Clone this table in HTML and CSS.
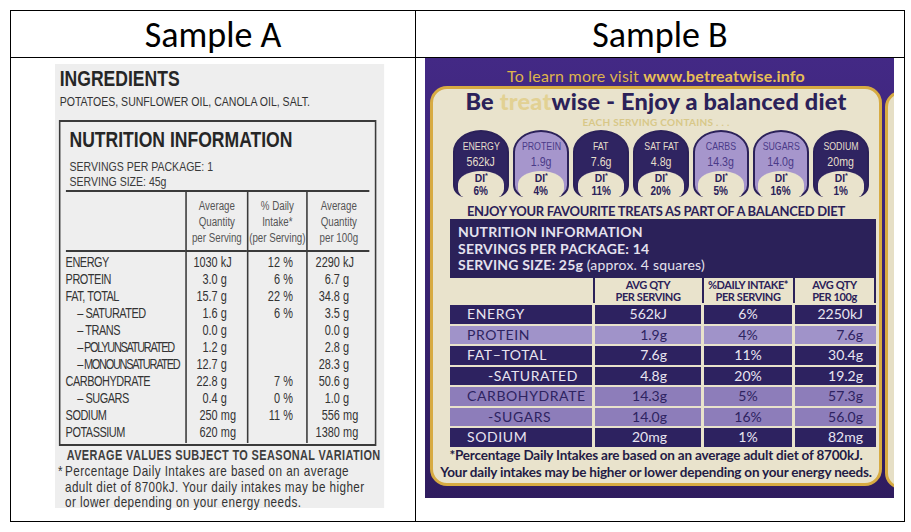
FILE: index.html
```html
<!DOCTYPE html>
<html lang="en">
<head>
<meta charset="utf-8">
<title>Sample A / Sample B</title>
<link rel="stylesheet" href="styles.css">
</head>
<body>
<div class="frame">
  <div class="head">Sample A</div>
  <div class="head head-b">Sample B</div>

  <div class="cell cell-a">
    <div class="label-a">
      <h1 class="ing-title">INGREDIENTS</h1>
      <p class="ing-text">POTATOES, SUNFLOWER OIL, CANOLA OIL, SALT.</p>
      <div class="nip">
        <h2 class="nip-title">NUTRITION INFORMATION</h2>
        <p class="nip-serv">SERVINGS PER PACKAGE: 1<br>SERVING SIZE: 45g</p>
        <table class="nip-table">
          <colgroup><col class="col-n"><col class="col-2"><col class="col-3"><col class="col-4"></colgroup>
          <thead>
            <tr>
              <th class="c-name"></th>
              <th>Average<br>Quantity<br>per Serving</th>
              <th>% Daily<br>Intake*<br>(per Serving)</th>
              <th>Average<br>Quantity<br>per 100g</th>
            </tr>
          </thead>
          <tbody>
            <tr><td class="c-name">ENERGY</td><td class="v2"><span class="n">1030</span><span class="u">kJ</span></td><td class="v3"><span class="n">12</span><span class="u">%</span></td><td class="v4"><span class="n">2290</span><span class="u">kJ</span></td></tr>
            <tr><td class="c-name">PROTEIN</td><td class="v2"><span class="n">3.0</span><span class="u">g</span></td><td class="v3"><span class="n">6</span><span class="u">%</span></td><td class="v4"><span class="n">6.7</span><span class="u">g</span></td></tr>
            <tr><td class="c-name">FAT, TOTAL</td><td class="v2"><span class="n">15.7</span><span class="u">g</span></td><td class="v3"><span class="n">22</span><span class="u">%</span></td><td class="v4"><span class="n">34.8</span><span class="u">g</span></td></tr>
            <tr><td class="c-name sub">– SATURATED</td><td class="v2"><span class="n">1.6</span><span class="u">g</span></td><td class="v3"><span class="n">6</span><span class="u">%</span></td><td class="v4"><span class="n">3.5</span><span class="u">g</span></td></tr>
            <tr><td class="c-name sub">– TRANS</td><td class="v2"><span class="n">0.0</span><span class="u">g</span></td><td class="v3"></td><td class="v4"><span class="n">0.0</span><span class="u">g</span></td></tr>
            <tr><td class="c-name sub tight">– POLYUNSATURATED</td><td class="v2"><span class="n">1.2</span><span class="u">g</span></td><td class="v3"></td><td class="v4"><span class="n">2.8</span><span class="u">g</span></td></tr>
            <tr><td class="c-name sub tight">– MONOUNSATURATED</td><td class="v2"><span class="n">12.7</span><span class="u">g</span></td><td class="v3"></td><td class="v4"><span class="n">28.3</span><span class="u">g</span></td></tr>
            <tr><td class="c-name">CARBOHYDRATE</td><td class="v2"><span class="n">22.8</span><span class="u">g</span></td><td class="v3"><span class="n">7</span><span class="u">%</span></td><td class="v4"><span class="n">50.6</span><span class="u">g</span></td></tr>
            <tr><td class="c-name sub">– SUGARS</td><td class="v2"><span class="n">0.4</span><span class="u">g</span></td><td class="v3"><span class="n">0</span><span class="u">%</span></td><td class="v4"><span class="n">1.0</span><span class="u">g</span></td></tr>
            <tr><td class="c-name">SODIUM</td><td class="v2"><span class="n">250</span><span class="u">mg</span></td><td class="v3"><span class="n">11</span><span class="u">%</span></td><td class="v4"><span class="n">556</span><span class="u">mg</span></td></tr>
            <tr><td class="c-name">POTASSIUM</td><td class="v2"><span class="n">620</span><span class="u">mg</span></td><td class="v3"></td><td class="v4"><span class="n">1380</span><span class="u">mg</span></td></tr>
          </tbody>
        </table>
      </div>
      <p class="avg-note">AVERAGE VALUES SUBJECT TO SEASONAL VARIATION</p>
      <p class="di-note"><span class="ast">*</span>Percentage Daily Intakes are based on an average<br>adult diet of 8700kJ. Your daily intakes may be higher<br>or lower depending on your energy needs.</p>
    </div>
  </div>

  <div class="cell cell-b">
    <div class="photo-b">
      <p class="visit">To learn more visit <b>www.betreatwise.info</b></p>
      <div class="labels">
        <div class="label-b">
          <h2 class="tw-title">Be <span class="treat">treat</span>wise - Enjoy a balanced diet</h2>
          <p class="each">EACH SERVING CONTAINS . . .</p>
          <div class="gda-row">
            <div class="gda dark"><div class="gda-top"><span class="g-name">ENERGY</span><span class="g-val">562kJ</span></div><div class="gda-bot"><span class="g-di">DI<small>*</small></span><span class="g-pct">6%</span></div></div>
            <div class="gda light"><div class="gda-top"><span class="g-name">PROTEIN</span><span class="g-val">1.9g</span></div><div class="gda-bot"><span class="g-di">DI<small>*</small></span><span class="g-pct">4%</span></div></div>
            <div class="gda dark"><div class="gda-top"><span class="g-name">FAT</span><span class="g-val">7.6g</span></div><div class="gda-bot"><span class="g-di">DI<small>*</small></span><span class="g-pct">11%</span></div></div>
            <div class="gda dark"><div class="gda-top"><span class="g-name">SAT FAT</span><span class="g-val">4.8g</span></div><div class="gda-bot"><span class="g-di">DI<small>*</small></span><span class="g-pct">20%</span></div></div>
            <div class="gda light"><div class="gda-top"><span class="g-name">CARBS</span><span class="g-val">14.3g</span></div><div class="gda-bot"><span class="g-di">DI<small>*</small></span><span class="g-pct">5%</span></div></div>
            <div class="gda light"><div class="gda-top"><span class="g-name">SUGARS</span><span class="g-val">14.0g</span></div><div class="gda-bot"><span class="g-di">DI<small>*</small></span><span class="g-pct">16%</span></div></div>
            <div class="gda dark"><div class="gda-top"><span class="g-name">SODIUM</span><span class="g-val">20mg</span></div><div class="gda-bot"><span class="g-di">DI<small>*</small></span><span class="g-pct">1%</span></div></div>
          </div>
          <p class="enjoy">ENJOY YOUR FAVOURITE TREATS AS PART OF A BALANCED DIET</p>
          <div class="ni-box">
            <p class="ni-title">NUTRITION INFORMATION</p>
            <p>SERVINGS PER PACKAGE: 14</p>
            <p>SERVING SIZE: 25g <span class="reg">(approx. 4 squares)</span></p>
          </div>
          <div class="tb">
            <div class="tb-row tb-head">
              <div class="h1"></div>
              <div class="hc">AVG QTY<br>PER SERVING</div>
              <div class="hc">%DAILY INTAKE*<br>PER SERVING</div>
              <div class="hc last">AVG QTY<br>PER 100g</div>
            </div>
            <div class="tb-row dark"><div class="k">ENERGY</div><div class="a">562kJ</div><div class="p">6%</div><div class="b">2250kJ</div></div>
            <div class="tb-row lav1"><div class="k">PROTEIN</div><div class="a">1.9g</div><div class="p">4%</div><div class="b">7.6g</div></div>
            <div class="tb-row dark"><div class="k">FAT–TOTAL</div><div class="a">7.6g</div><div class="p">11%</div><div class="b">30.4g</div></div>
            <div class="tb-row dark"><div class="k sub">-SATURATED</div><div class="a">4.8g</div><div class="p">20%</div><div class="b">19.2g</div></div>
            <div class="tb-row lav2"><div class="k">CARBOHYDRATE</div><div class="a">14.3g</div><div class="p">5%</div><div class="b">57.3g</div></div>
            <div class="tb-row lav2"><div class="k sub">-SUGARS</div><div class="a">14.0g</div><div class="p">16%</div><div class="b">56.0g</div></div>
            <div class="tb-row dark"><div class="k">SODIUM</div><div class="a">20mg</div><div class="p">1%</div><div class="b">82mg</div></div>
          </div>
          <p class="b-note">*Percentage Daily Intakes are based on an average adult diet of 8700kJ.<br>Your daily intakes may be higher or lower depending on your energy needs.</p>
        </div>
        <div class="label-next"></div>
      </div>
    </div>
  </div>
</div>
</body>
</html>
```
FILE: styles.css
```css
* { box-sizing: border-box; }
html, body { margin: 0; padding: 0; background: #ffffff; }
body {
  padding: 10px 0 0 10px;
  font-family: "Liberation Sans", Arial, sans-serif;
}
p, h1, h2 { margin: 0; }

/* outer comparison table */
.frame {
  width: 895px;
  height: 512px;
  border: 1px solid #000;
  display: grid;
  grid-template-columns: 404px 1fr;
  grid-template-rows: 47px 1fr;
}
.head {
  border-bottom: 1px solid #000;
  display: flex;
  align-items: center;
  justify-content: center;
  font-family: Carlito, Calibri, Lato, sans-serif;
  font-size: 36px;
  color: #000;
  padding-top: 1px;
}
.head-b, .cell-b { border-left: 1px solid #000; }
.cell { overflow: hidden; }
.cell-a { padding: 6px 0 0 44px; }
.cell-b { padding: 0 0 0 9px; }

/* ---------- Sample A (a photographed, condensed-type label) ---------- */
.label-a {
  width: 422px;
  height: 444px;
  background: #eeeeee;
  color: #333;
  padding: 4px 0 0 6px;
  font-family: "Liberation Sans", Arial, sans-serif;
  transform: scaleX(0.78);
  transform-origin: 0 0;
}
.ing-title {
  font-size: 22.5px;
  line-height: 22px;
  font-weight: 700;
  color: #262626;
}
.ing-text {
  margin-top: 5px;
  font-size: 13.5px;
  line-height: 14px;
  color: #333;
  white-space: nowrap;
}
.nip {
  margin-top: 11px;
  margin-left: -1px;
  width: 407px;
  height: 326px;
  border-style: solid;
  border-color: #3a3a3a;
  border-width: 2px 2.5px;
  padding: 7px 6px 0 6.6px;
}
.nip-title {
  padding-left: 5px;
  font-size: 22.5px;
  line-height: 21px;
  font-weight: 700;
  color: #262626;
}
.nip-serv {
  margin-top: 9px;
  padding-left: 5px;
  font-size: 13.5px;
  line-height: 15px;
  color: #3a3a3a;
}
.nip-table {
  margin-top: 1px;
  width: 389.7px;
  border-collapse: separate;
  border-spacing: 0;
  table-layout: fixed;
  border-top: 2px solid #3a3a3a;
  color: #333;
}
.col-n { width: 153.8px; }
.col-2 { width: 78.2px; }
.col-3 { width: 76.9px; }
.col-4 { width: 80.8px; }
.nip-table th {
  font-weight: 400;
  font-size: 12.5px;
  line-height: 16px;
  color: #555;
  padding: 6px 0 4px;
  border-left: 2.5px solid #3a3a3a;
  border-bottom: 2px solid #3a3a3a;
  text-align: center;
  white-space: nowrap;
}
.nip-table th.c-name { border-left: 0; }
.nip-table td {
  font-size: 14px;
  line-height: 17px;
  padding: 0;
  white-space: nowrap;
  border-left: 2.5px solid #3a3a3a;
}
.nip-table td.c-name { border-left: 0; letter-spacing: -0.6px; }
.nip-table tbody tr:first-child td { padding-top: 2px; }
.nip-table tbody tr:last-child td { padding-bottom: 2px; }
.nip-table td.sub { padding-left: 15px; }
.nip-table td.tight { letter-spacing: -1.6px; }
.v2, .v3, .v4 { text-align: right; }
.nip-table td.v2 { padding-right: 4px; }
.nip-table td.v3 { padding-right: 12px; }
.nip-table td.v4 { padding-right: 6px; }
.u { display: inline-block; text-align: left; padding-left: 4px; }
.v2 .u { width: 33px; }
.v3 .u { width: 22px; }
.v4 .u { width: 32px; }

.avg-note {
  margin-top: 2px;
  padding-left: 9px;
  font-size: 14px;
  line-height: 15px;
  font-weight: 700;
  letter-spacing: 0.5px;
  color: #3e3e3e;
  white-space: nowrap;
}
.di-note {
  margin-left: -2.2px;
  padding-left: 9px;
  text-indent: -9px;
  font-size: 15px;
  line-height: 15.5px;
  letter-spacing: 0.55px;
  color: #333;
  white-space: nowrap;
}
.ast { display: inline-block; width: 9px; text-indent: 0; }

/* ---------- Sample B ---------- */
.photo-b {
  width: 469px;
  height: 440px;
  overflow: hidden;
  background: linear-gradient(180deg, #432985 0%, #3a2374 45%, #2f1c5f 100%);
  padding: 9px 0 0 5px;
  font-family: Lato, "Open Sans", sans-serif;
}
.visit {
  width: 452px;
  text-align: center;
  font-size: 16px;
  line-height: 18px;
  color: #deb44c;
  letter-spacing: 0.2px;
}
.visit b { font-weight: 700; color: #e8bf55; }
.labels {
  margin-top: 1px;
  display: flex;
  gap: 3px;
  width: 520px;
}
.label-b {
  flex: 0 0 452px;
  height: 400px;
  background: #e9e3cc;
  border: 3px solid #d7ab42;
  border-radius: 17px;
  color: #2b2159;
  display: flex;
  flex-direction: column;
}
.label-next {
  flex: 0 0 40px;
  height: 398px;
  margin-top: 5px;
  background: #e6dfc6;
  border: 3px solid #d7ab42;
  border-radius: 16px 0 0 16px;
}
.tw-title {
  text-align: center;
  font-size: 23.5px;
  line-height: 24px;
  font-weight: 900;
  color: #2b2159;
  letter-spacing: 0.2px;
}
.treat { color: #e2d193; }
.each {
  margin-top: 3px;
  text-align: center;
  font-size: 10px;
  line-height: 12px;
  font-weight: 700;
  color: #d8c888;
  letter-spacing: 0.3px;
}
.gda-row {
  margin: 2px 0 0 20px;
  display: flex;
  gap: 4px;
}
.gda {
  width: 56px;
  height: 67px;
  border: 2px solid #2b2159;
  border-radius: 28px 28px 12px 12px / 22px 22px 12px 12px;
  display: flex;
  flex-direction: column;
  align-items: center;
  font-family: "Liberation Sans", Arial, sans-serif;
}
.gda.dark { background: #2f2461; color: #e6dfcc; }
.gda.light { background: #a696cc; color: #4a3a88; }
.gda-top {
  padding-top: 8px;
  display: flex;
  flex-direction: column;
  align-items: center;
}
.g-name { display: inline-block; font-size: 11px; line-height: 12px; transform: scaleX(0.8); white-space: nowrap; }
.g-val { display: inline-block; margin-top: 3px; font-size: 12.5px; line-height: 14px; transform: scaleX(0.85); }
.gda-bot {
  margin-top: 2px;
  align-self: stretch;
  flex: 1;
  margin-left: 3px;
  margin-right: 3px;
  background: #e9e3cc;
  border-radius: 50% 50% 9px 9px / 13px 13px 9px 9px;
  display: flex;
  flex-direction: column;
  align-items: center;
  padding-top: 1px;
  color: #2b2159;
  font-weight: 700;
}
.g-di { display: inline-block; font-size: 11.5px; line-height: 12px; transform: scaleX(0.9); }
.g-di small { font-size: 8px; vertical-align: top; line-height: 8px; }
.g-pct { display: inline-block; font-size: 13.5px; line-height: 14px; transform: scaleX(0.74); }

.enjoy {
  margin-top: 6px;
  text-align: center;
  font-size: 13px;
  line-height: 16px;
  font-weight: 700;
  letter-spacing: -0.3px;
  color: #2b2159;
}
.ni-box {
  margin: 0 0 0 17px;
  width: 426px;
  height: 59px;
  background: #2b2159;
  color: #e5e1ee;
  padding: 5px 0 0 8px;
  font-size: 14px;
  line-height: 16.5px;
  font-weight: 700;
  letter-spacing: 0.2px;
}
.ni-box .reg { font-weight: 400; }

.tb {
  margin-left: 17px;
  width: 426px;
  display: flex;
  flex-direction: column;
  gap: 2px;
}
.tb-row {
  display: grid;
  grid-template-columns: 142px 106px 88px 81px;
  column-gap: 3px;
  height: 18.5px;
  font-size: 14px;
  line-height: 18.5px;
}
.tb-head {
  height: 25px;
  line-height: 12px;
  font-size: 11px;
  font-weight: 700;
  color: #2b2159;
  text-align: center;
}
.tb-head .hc {
  border-left: 2px solid #2b2159;
  margin-left: -2px;
  padding-top: 1px;
  letter-spacing: -0.4px;
}
.tb-head .hc.last { border-right: 2px solid #2b2159; }
.tb-row.dark > div { background: #2d2260; color: #e9e5f1; }
.tb-row.lav1 > div { background: #a093c9; color: #2e2361; }
.tb-row.lav2 > div { background: #8d7dba; color: #2e2361; }
.tb-row .k { padding-left: 17px; letter-spacing: 0.6px; white-space: nowrap; }
.tb-row .k.sub { padding-left: 38px; }
.tb-row .a { text-align: right; padding-right: 34px; }
.tb-row .p { text-align: center; }
.tb-row .b { text-align: right; padding-right: 13px; }

.b-note {
  margin-top: 0;
  text-align: center;
  font-size: 13.5px;
  line-height: 17px;
  font-weight: 700;
  color: #231b45;
  letter-spacing: -0.2px;
  white-space: nowrap;
}
```
